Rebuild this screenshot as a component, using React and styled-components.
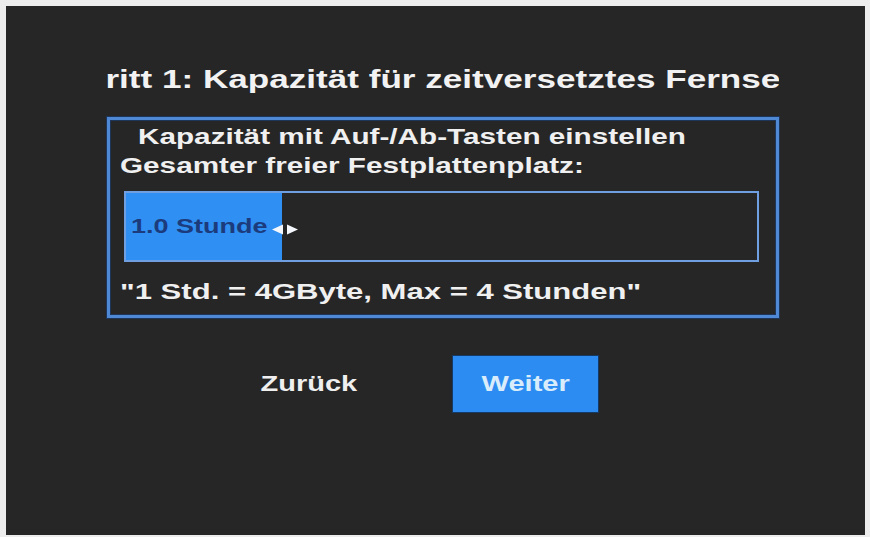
import React from "react";
import styled, { createGlobalStyle } from "styled-components";

const GlobalStyle = createGlobalStyle`
  html, body {
    margin: 0;
    padding: 0;
    background: #ededed;
  }
  body {
    font-family: "Liberation Sans", Arial, sans-serif;
  }
`;

// the menu is a 4:3 picture shown on a wide screen, so the glyphs run wide
const Wide = styled.span`
  display: inline-block;
  white-space: nowrap;
  transform: scaleX(${(p) => p.$scale || 1.35});
  transform-origin: ${(p) => (p.$center ? "center" : "left")} center;
`;

// TV screen area
const Screen = styled.div`
  box-sizing: border-box;
  width: 859px;
  height: 529px;
  margin: 6px 0 0 6px;
  padding: 58px 0 0 99px;
  background: #262626;
  overflow: hidden;
`;

const Column = styled.div`
  width: 674px;
  display: flex;
  flex-direction: column;
`;

const Title = styled.h1`
  margin: 0;
  height: 30px;
  line-height: 30px;
  display: flex;
  justify-content: center;
  overflow: hidden;
  white-space: nowrap;
  font-size: 26px;
  font-weight: bold;
  color: #f2f2f2;
`;

const Panel = styled.section`
  box-sizing: border-box;
  width: 672px;
  margin: 23px 0 0 2px;
  padding: 2px 0 9px 10px;
  border: 3px solid #4f89d6;
  box-shadow: inset 0 0 0 1px #1d3558, 0 0 0 1px #1d3558;
`;

const Line = styled.div`
  line-height: 29px;
  font-size: ${(p) => p.$size || "22px"};
  font-weight: bold;
  color: #f0f0f0;
  white-space: nowrap;
  margin-left: ${(p) => p.$indent || "0"};
  margin-top: ${(p) => p.$top || "0"};
`;

const Bar = styled.div`
  box-sizing: border-box;
  width: 635px;
  height: 71px;
  margin: 11px 0 0 4px;
  border: 2px solid #6f9fe0;
  display: flex;
  align-items: stretch;
`;

const Fill = styled.div`
  box-sizing: border-box;
  width: 156px;
  padding-left: 5px;
  display: flex;
  align-items: center;
  background: #2f8ff2;
  font-size: 20px;
  font-weight: bold;
  color: #1c3b7c;
  white-space: nowrap;
`;

const Arrows = styled.div`
  display: flex;
  align-items: center;
  gap: 4px;
  margin-left: -10px;
  padding-top: 5px;
`;

const ButtonRow = styled.div`
  display: flex;
  gap: 72px;
  margin: 38px 0 0 131px;
`;

const Button = styled.div`
  box-sizing: border-box;
  width: 145px;
  height: 56px;
  display: flex;
  align-items: center;
  justify-content: center;
  font-size: 21.5px;
  font-weight: bold;
  color: ${(p) => (p.$active ? "#d8ecfb" : "#efefef")};
  background: ${(p) => (p.$active ? "#2d8cf1" : "transparent")};
  box-shadow: ${(p) => (p.$active ? "0 0 0 1px #163a66" : "none")};
`;

const Arrow = ({ dir }) => (
  <svg width="11" height="11" viewBox="0 0 11 11">
    {dir === "left" ? (
      <polygon points="11,0.5 11,10.5 0,5.5" fill="#f4f8fc" />
    ) : (
      <polygon points="0,0.5 0,10.5 11,5.5" fill="#f4f8fc" />
    )}
  </svg>
);

export default function App() {
  return (
    <>
      <GlobalStyle />
      <Screen>
        <Column>
          <Title>
            <Wide $center>Schritt 1: Kapazität für zeitversetztes Fernsehen</Wide>
          </Title>

          <Panel>
            <Line $indent="18px">
              <Wide>Kapazität mit Auf-/Ab-Tasten einstellen</Wide>
            </Line>
            <Line>
              <Wide>Gesamter freier Festplattenplatz:</Wide>
            </Line>
            <Bar>
              <Fill>
                <Wide>1.0 Stunde</Wide>
              </Fill>
              <Arrows>
                <Arrow dir="left" />
                <Arrow dir="right" />
              </Arrows>
            </Bar>
            <Line $top="15px" $size="22.5px">
              <Wide $scale={1.38}>"1 Std. = 4GByte, Max = 4 Stunden"</Wide>
            </Line>
          </Panel>

          <ButtonRow>
            <Button>
              <Wide $center>Zurück</Wide>
            </Button>
            <Button $active>
              <Wide $center>Weiter</Wide>
            </Button>
          </ButtonRow>
        </Column>
      </Screen>
    </>
  );
}
